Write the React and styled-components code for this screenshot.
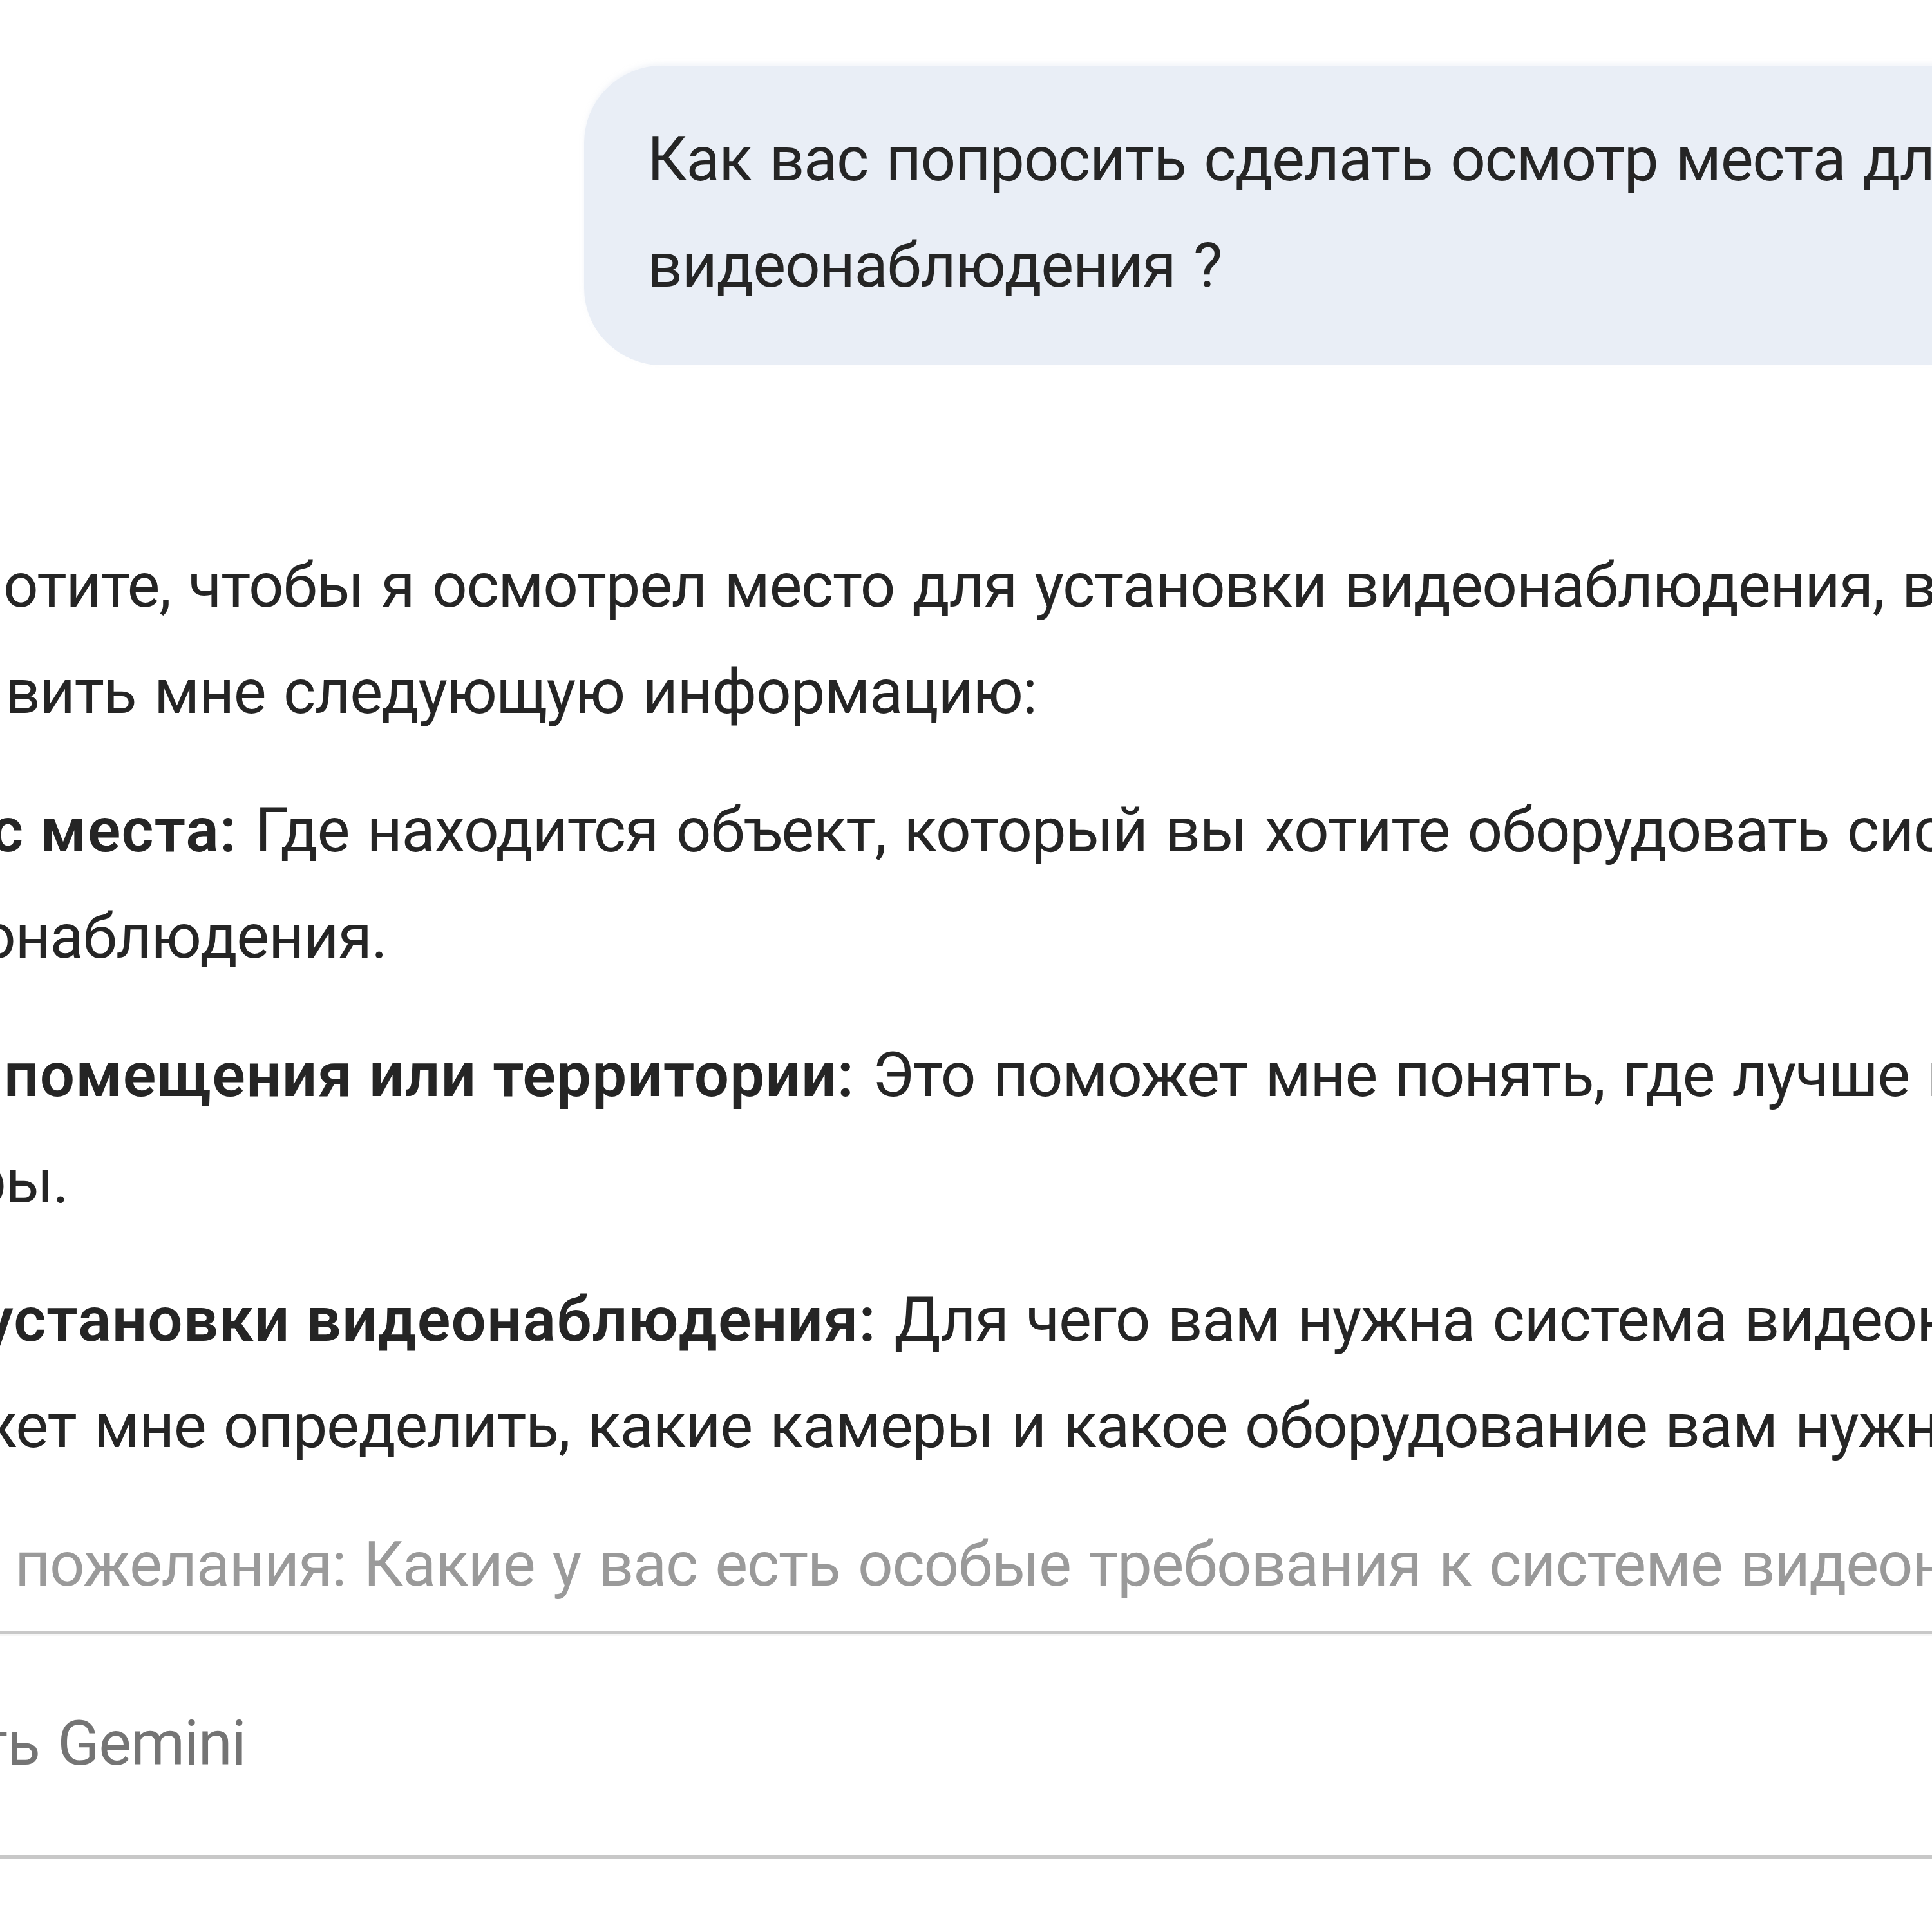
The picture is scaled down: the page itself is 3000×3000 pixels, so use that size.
import React from "react";
import styled, { createGlobalStyle } from "styled-components";

const GlobalStyle = createGlobalStyle`
  html, body {
    margin: 0;
    padding: 0;
    background: #ffffff;
  }
  #root {
    width: 3000px;
    height: 3000px;
    overflow: hidden;
  }
`;

const Page = styled.div`
  width: 3000px;
  height: 3000px;
  overflow: hidden;
  display: flex;
  flex-direction: column;
  background: #ffffff;
  font-family: Roboto, "Noto Sans", "Liberation Sans", sans-serif;
  color: #252525;
`;

const UserRow = styled.div`
  display: flex;
  padding: 102px 0 0 907px;
`;

const Bubble = styled.div`
  flex: none;
  width: 2400px;
  background: #e9eef6;
  border-radius: 120px 0 0 120px;
  padding: 63px 0 72px 98px;
  box-sizing: border-box;
  box-shadow: 0 -4px 6px rgba(233, 238, 246, 0.5);
`;

const Line = styled.div`
  white-space: nowrap;
  font-size: 96px;
  line-height: 165px;
  letter-spacing: -1.3px;
  word-spacing: 5px;
  margin-left: ${(p) => p.$shift || 0}px;
  color: ${(p) => (p.$faded ? "#9a9a9a" : "inherit")};
`;

const Strong = styled.span`
  font-weight: 600;
  letter-spacing: 1.1px;
  word-spacing: 0;
`;

const Response = styled.div`
  display: flex;
  flex-direction: column;
  gap: 50px;
  margin-top: 260px;
`;

const Paragraph = styled.div`
  display: flex;
  flex-direction: column;
`;

const InputBox = styled.div`
  margin-top: 20px;
  border-top: 5px solid #c8c8c8;
  border-bottom: 5px solid #c8c8c8;
  padding: 88px 0 91px 0;
  box-shadow: inset 0 22px 0 -18px #f6f6f6;
`;

const Placeholder = styled(Line)`
  color: #747474;
`;

const Disclaimer = styled.div`
  margin-top: 104px;
  padding-left: 640px;
  white-space: nowrap;
  font-size: 72px;
  line-height: 100px;
  color: #8a8a8a;
`;

export default function App() {
  return (
    <>
      <GlobalStyle />
      <Page>
        <UserRow>
          <Bubble>
            <Line>Как вас попросить сделать осмотр места для установки системы</Line>
            <Line>видеонаблюдения ?</Line>
          </Bubble>
        </UserRow>

        <Response>
          <Paragraph>
            <Line $shift={5}>отите, чтобы я осмотрел место для установки видеонаблюдения, вам нужно</Line>
            <Line $shift={8}>вить мне следующую информацию:</Line>
          </Paragraph>
          <Paragraph>
            <Line $shift={-14}>
              <Strong>с места:</Strong> Где находится объект, который вы хотите оборудовать системой
            </Line>
            <Line $shift={-30}>онаблюдения.</Line>
          </Paragraph>
          <Paragraph>
            <Line $shift={6}>
              <Strong>помещения или территории:</Strong> Это поможет мне понять, где лучше всего
            </Line>
            <Line $shift={-44}>ры.</Line>
          </Paragraph>
          <Paragraph>
            <Line $shift={-27}>
              <Strong>установки видеонаблюдения:</Strong> Для чего вам нужна система видеонаблюдения?
            </Line>
            <Line $shift={-47}>жет мне определить, какие камеры и какое оборудование вам нужно.</Line>
          </Paragraph>
          <Paragraph>
            <Line $shift={23} $faded>
              пожелания: Какие у вас есть особые требования к системе видеонаблюдения?
            </Line>
          </Paragraph>
        </Response>

        <InputBox>
          <Placeholder $shift={-34}>ть Gemini</Placeholder>
        </InputBox>

        <Disclaimer>
          Gemini может отображать неточную информацию, в том числе о людях, поэтому проверяйте его ответы.
        </Disclaimer>
      </Page>
    </>
  );
}
